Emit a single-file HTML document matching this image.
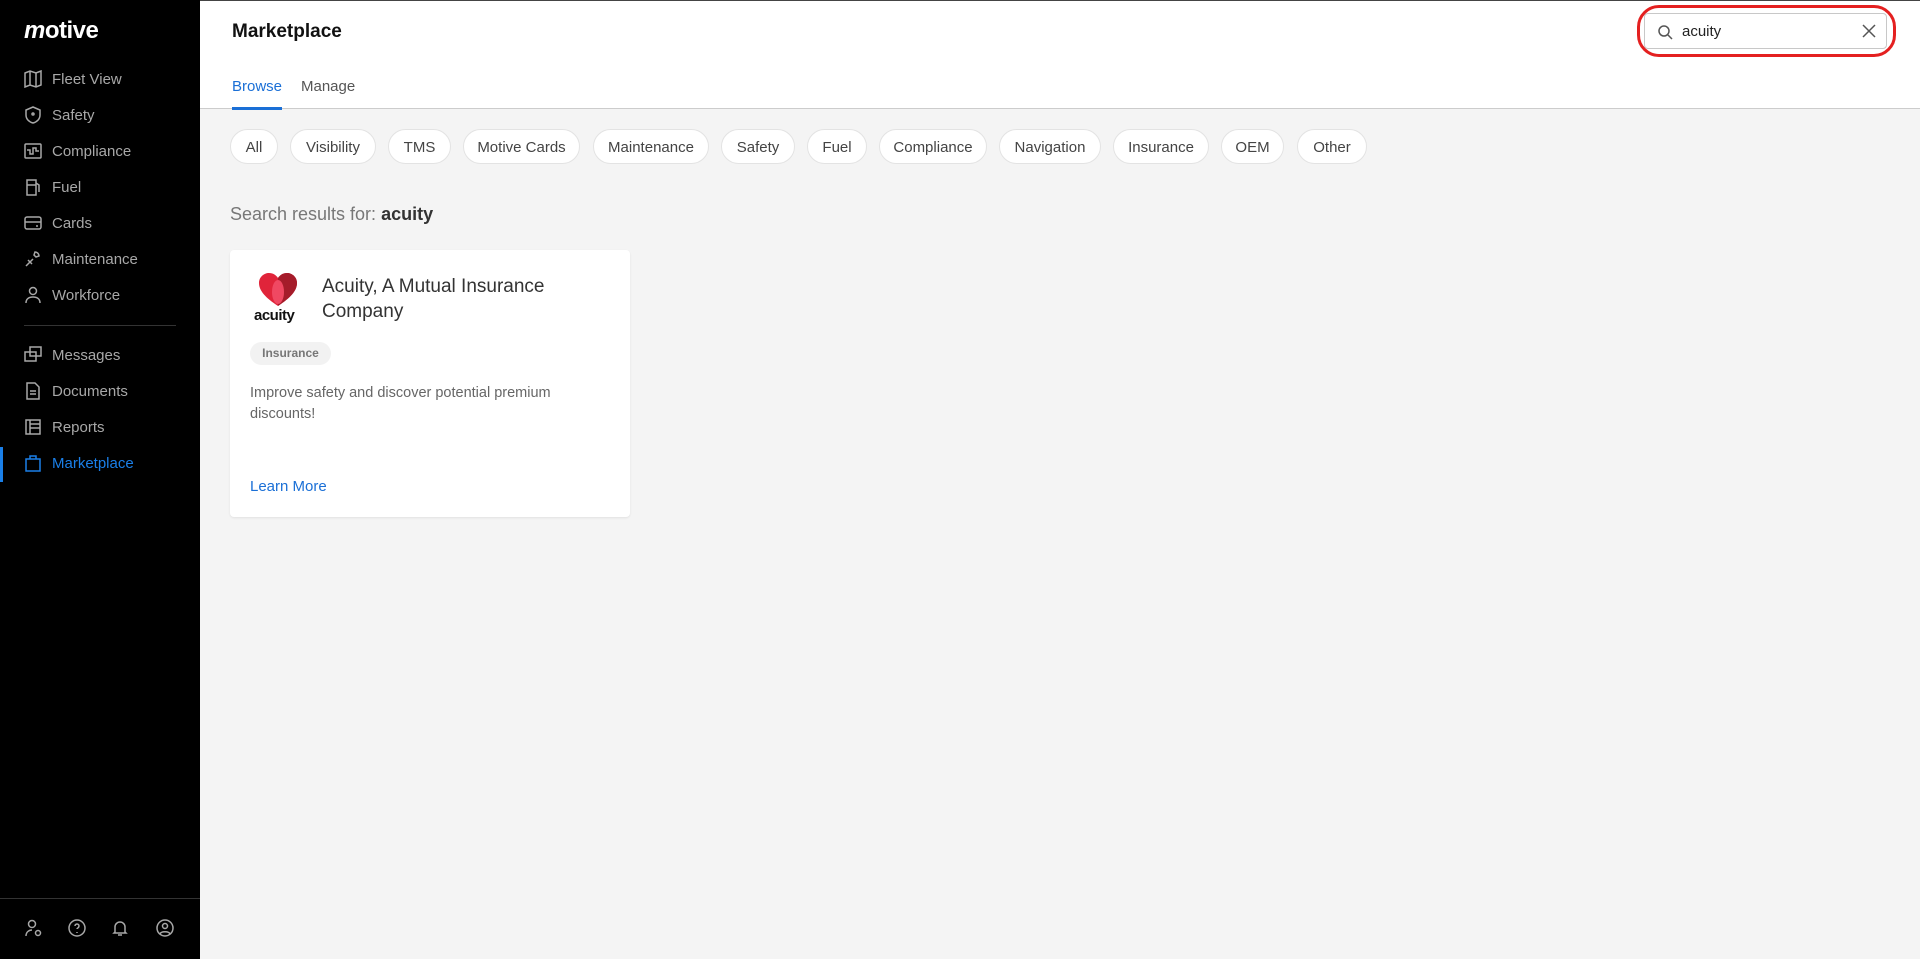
<!DOCTYPE html>
<html><head><meta charset="utf-8"><style>
*{box-sizing:border-box;margin:0;padding:0}
body{width:1920px;height:959px;overflow:hidden;font-family:"Liberation Sans",sans-serif;background:#f4f4f4;position:relative}
#side{position:absolute;left:0;top:0;width:200px;height:959px;background:#000;color:#b3b3b3}
.logo{position:absolute;left:24px;top:17px;color:#fff;font-weight:bold;font-size:24px;letter-spacing:-0.5px}
.nav{position:absolute;left:24px;height:24px;display:flex;align-items:center;font-size:15px;color:#a8a8a8}
.nav svg{width:18px;height:18px;margin-right:10px;stroke:#a8a8a8;fill:none;stroke-width:1.5}
.nav.act{color:#1a7fe8}.nav.act svg{stroke:#1a7fe8}
.bar{position:absolute;left:0;top:447px;width:3px;height:35px;background:#1a7fe8}
.div{position:absolute;left:24px;width:152px;height:1px;background:#333}
.bi{position:absolute;top:919px;width:18px;height:18px;stroke:#a8a8a8;fill:none;stroke-width:1.5}
#head{position:absolute;left:200px;top:0;right:0;height:109px;background:#fff;border-bottom:1px solid #ccc;border-top:1px solid #444}
h1{position:absolute;left:32px;top:20px;font-size:19px;font-weight:bold;color:#111}
.tab{position:absolute;top:77px;font-size:15px;color:#555}
.chip{position:absolute;top:129px;height:35px;padding-top:2px;border-radius:18px;background:#fff;border:1px solid #e3e3e3;font-size:15px;color:#444;display:flex;align-items:center;justify-content:center}
.card{position:absolute;left:230px;top:250px;width:400px;height:267px;background:#fff;border-radius:4px;box-shadow:0 1px 2px rgba(0,0,0,.08)}
</style></head><body>
<div id="side">
<div class="logo"><i>m</i>otive</div>
<div class="nav" style="top:67px"><svg viewBox="0 0 18 18"><path d="M1 3l5-2 6 2 5-2v14l-5 2-6-2-5 2z M6 1v14 M12 3v14"/></svg>Fleet View</div>
<div class="nav" style="top:103px"><svg viewBox="0 0 18 18"><path d="M9 1l7 3v5c0 4-3 7-7 8-4-1-7-4-7-8V4z"/><circle cx="9" cy="8" r="1"/></svg>Safety</div>
<div class="nav" style="top:139px"><svg viewBox="0 0 18 18"><rect x="1" y="2" width="16" height="14" rx="1"/><path d="M3 8h3v4h3V6h3v3h3"/></svg>Compliance</div>
<div class="nav" style="top:175px"><svg viewBox="0 0 18 18"><path d="M3 17V2h9v15z M3 7h9 M12 5l3 2v7"/></svg>Fuel</div>
<div class="nav" style="top:211px"><svg viewBox="0 0 18 18"><rect x="1" y="3" width="16" height="12" rx="2"/><path d="M1 8h16 M12 12h2"/></svg>Cards</div>
<div class="nav" style="top:247px"><svg viewBox="0 0 18 18"><path d="M2 16l7-7 M11 2a4 4 0 014 4l-3 1-2-2z M4 10l4 4"/></svg>Maintenance</div>
<div class="nav" style="top:283px"><svg viewBox="0 0 18 18"><circle cx="9" cy="5" r="3.5"/><path d="M2 17c0-4 3-6 7-6s7 2 7 6"/></svg>Workforce</div>
<div class="div" style="top:325px"></div>
<div class="nav" style="top:343px"><svg viewBox="0 0 18 18"><rect x="6" y="1" width="11" height="9"/><rect x="1" y="6" width="11" height="9"/></svg>Messages</div>
<div class="nav" style="top:379px"><svg viewBox="0 0 18 18"><path d="M3 1h8l4 4v12H3z M6 9h6 M6 12h6"/></svg>Documents</div>
<div class="nav" style="top:415px"><svg viewBox="0 0 18 18"><rect x="2" y="2" width="14" height="14"/><path d="M6 2v14 M6 6h10 M6 10h10"/></svg>Reports</div>
<div class="bar"></div>
<div class="nav act" style="top:451px"><svg viewBox="0 0 18 18"><path d="M2 5h14v12H2z M6 5V2h6v3"/></svg>Marketplace</div>
<div class="div" style="top:898px;left:0;width:200px"></div>
<svg class="bi" style="left:25px" viewBox="0 0 18 18"><circle cx="7" cy="5" r="3.5"/><path d="M1 17c0-4 3-6 6-6"/><circle cx="13" cy="14" r="2.5"/></svg>
<svg class="bi" style="left:68px" viewBox="0 0 18 18"><circle cx="9" cy="9" r="8"/><path d="M7 7a2 2 0 114 0c0 2-2 2-2 3 M9 13v1"/></svg>
<svg class="bi" style="left:111px" viewBox="0 0 18 18"><path d="M4 13V8a5 5 0 0110 0v5l1 1H3z M7 16h4"/></svg>
<svg class="bi" style="left:156px" viewBox="0 0 18 18"><circle cx="9" cy="9" r="8"/><circle cx="9" cy="7" r="2.5"/><path d="M4 15c1-3 9-3 10 0"/></svg>
</div>
<div id="head">
<h1>Marketplace</h1>
<div class="tab" style="left:32px;color:#1a6fd6">Browse</div>
<div style="position:absolute;left:32px;top:106px;width:50px;height:3px;background:#1a6fd6"></div>
<div class="tab" style="left:101px">Manage</div>
<div style="position:absolute;left:1437px;top:4px;width:259px;height:52px;border:3px solid #e42020;border-radius:22px"></div>
<div style="position:absolute;left:1444px;top:12px;width:243px;height:36px;border:1px solid #c8c8c8;border-radius:4px">
<svg style="position:absolute;left:12px;top:10px" width="16" height="16" viewBox="0 0 16 16" fill="none" stroke="#555" stroke-width="1.5"><circle cx="7" cy="7" r="5"/><path d="M11 11l4 4"/></svg>
<span style="position:absolute;left:37px;top:9px;font-size:15px;color:#222">acuity</span>
<svg style="position:absolute;left:217px;top:10px" width="14" height="14" viewBox="0 0 14 14" stroke="#555" stroke-width="1.5"><path d="M1 1l12 12M13 1L1 13"/></svg>
</div>
</div>
<div class="chip" style="left:230px;width:48px">All</div>
<div class="chip" style="left:290px;width:86px">Visibility</div>
<div class="chip" style="left:388px;width:63px">TMS</div>
<div class="chip" style="left:463px;width:117px">Motive Cards</div>
<div class="chip" style="left:593px;width:116px">Maintenance</div>
<div class="chip" style="left:721px;width:74px">Safety</div>
<div class="chip" style="left:807px;width:60px">Fuel</div>
<div class="chip" style="left:879px;width:108px">Compliance</div>
<div class="chip" style="left:999px;width:102px">Navigation</div>
<div class="chip" style="left:1113px;width:96px">Insurance</div>
<div class="chip" style="left:1221px;width:63px">OEM</div>
<div class="chip" style="left:1297px;width:70px">Other</div>
<div style="position:absolute;left:230px;top:204px;font-size:18px;color:#777">Search results for: <b style="color:#333">acuity</b></div>
<div class="card">
<svg style="position:absolute;left:26px;top:22px" width="44" height="34" viewBox="0 0 44 34"><path d="M22 34C10 26 3 19 3 11 3 5 8 1 13 1c4 0 7 2 9 5 2-3 5-5 9-5 5 0 10 4 10 10 0 8-7 15-19 23z" fill="#e0243a"/><path d="M22 6c2-3 5-5 9-5 5 0 10 4 10 10 0 8-7 15-19 23z" fill="#a51c2a"/><ellipse cx="22" cy="20" rx="6" ry="12" fill="#f04862"/></svg>
<div style="position:absolute;left:24px;top:57px;font-size:15px;font-weight:bold;color:#111;letter-spacing:-.5px">acuity</div>
<div style="position:absolute;left:92px;top:24px;font-size:19px;line-height:25px;color:#333;width:280px">Acuity, A Mutual Insurance Company</div>
<div style="position:absolute;left:20px;top:92px;width:81px;height:23px;border-radius:12px;background:#f2f2f2;font-size:12px;font-weight:bold;color:#777;text-align:center;line-height:23px">Insurance</div>
<div style="position:absolute;left:20px;top:133px;font-size:14.5px;line-height:21px;color:#666;width:340px">Improve safety and discover potential premium discounts!</div>
<div style="position:absolute;left:20px;top:228px;font-size:15px;color:#1a6fd6">Learn More</div>
</div>
</body></html>
